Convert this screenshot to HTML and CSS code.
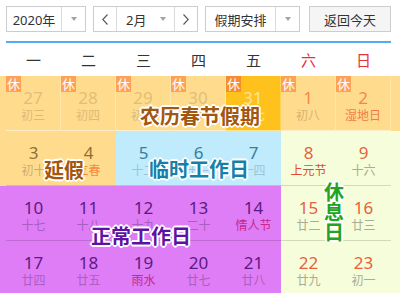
FILE: index.html
```html
<!DOCTYPE html>
<html lang="zh-CN">
<head>
    <meta charset="UTF-8">
    <meta name="viewport" content="width=device-width, initial-scale=1.0">
    <title>假期安排</title>
    <link rel="stylesheet" href="styles.css">
</head>
<body>
    <div class="toolbar">
        <div class="select year">
            <span class="select-text">2020年</span>
            <span class="select-arrow"><i class="caret"></i></span>
        </div>
        <div class="month-group">
            <button class="nav-btn">
                <svg width="6" height="11" viewBox="0 0 6 11"><polyline points="5.5,0.5 0.8,5.5 5.5,10.5" fill="none" stroke="#555" stroke-width="1.1"/></svg>
            </button>
            <div class="month-select"><span>2月</span><i class="caret"></i></div>
            <button class="nav-btn">
                <svg width="6" height="11" viewBox="0 0 6 11"><polyline points="0.5,0.5 5.2,5.5 0.5,10.5" fill="none" stroke="#555" stroke-width="1.1"/></svg>
            </button>
        </div>
        <div class="select holiday">
            <span class="select-text">假期安排</span>
            <span class="select-arrow"><i class="caret"></i></span>
        </div>
        <button class="today-btn">返回今天</button>
    </div>

    <div class="weekdays">
        <div>一</div><div>二</div><div>三</div><div>四</div><div>五</div>
        <div class="weekend">六</div><div class="weekend">日</div>
    </div>

    <div class="month-view">
        <!-- 假期区域底色 -->
        <div class="zone zone-spring"></div>
        <div class="zone zone-extend"></div>
        <div class="zone zone-temp"></div>
        <div class="zone zone-rest"></div>
        <div class="zone zone-work"></div>

        <div class="days">
            <div class="cell spring other"><span class="rest-tag">休</span><div class="num">27</div><div class="lunar">初三</div></div>
            <div class="cell spring other"><span class="rest-tag">休</span><div class="num">28</div><div class="lunar">初四</div></div>
            <div class="cell spring other"><span class="rest-tag">休</span><div class="num">29</div><div class="lunar">初五</div></div>
            <div class="cell spring other"><span class="rest-tag">休</span><div class="num">30</div><div class="lunar">初六</div></div>
            <div class="cell spring selected"><span class="rest-tag">休</span><div class="num">31</div><div class="lunar">初七</div></div>
            <div class="cell spring weekend"><span class="rest-tag">休</span><div class="num">1</div><div class="lunar">初八</div></div>
            <div class="cell spring weekend"><span class="rest-tag">休</span><div class="num">2</div><div class="lunar fest">湿地日</div></div>

            <div class="cell extend"><div class="num">3</div><div class="lunar">初十</div></div>
            <div class="cell extend"><div class="num">4</div><div class="lunar fest">立春</div></div>
            <div class="cell temp"><div class="num">5</div><div class="lunar">十二</div></div>
            <div class="cell temp"><div class="num">6</div><div class="lunar">十三</div></div>
            <div class="cell temp"><div class="num">7</div><div class="lunar">十四</div></div>
            <div class="cell rest"><div class="num">8</div><div class="lunar fest">上元节</div></div>
            <div class="cell rest"><div class="num">9</div><div class="lunar">十六</div></div>

            <div class="cell work"><div class="num">10</div><div class="lunar">十七</div></div>
            <div class="cell work"><div class="num">11</div><div class="lunar">十八</div></div>
            <div class="cell work"><div class="num">12</div><div class="lunar">十九</div></div>
            <div class="cell work"><div class="num">13</div><div class="lunar">二十</div></div>
            <div class="cell work"><div class="num">14</div><div class="lunar fest">情人节</div></div>
            <div class="cell rest"><div class="num">15</div><div class="lunar">廿二</div></div>
            <div class="cell rest"><div class="num">16</div><div class="lunar">廿三</div></div>

            <div class="cell work"><div class="num">17</div><div class="lunar">廿四</div></div>
            <div class="cell work"><div class="num">18</div><div class="lunar">廿五</div></div>
            <div class="cell work"><div class="num">19</div><div class="lunar fest">雨水</div></div>
            <div class="cell work"><div class="num">20</div><div class="lunar">廿七</div></div>
            <div class="cell work"><div class="num">21</div><div class="lunar">廿八</div></div>
            <div class="cell rest"><div class="num">22</div><div class="lunar">廿九</div></div>
            <div class="cell rest"><div class="num">23</div><div class="lunar">初一</div></div>
        </div>

        <!-- 区域说明文字 -->
        <div class="zone-label label-spring">农历春节假期</div>
        <div class="zone-label label-extend">延假</div>
        <div class="zone-label label-temp">临时工作日</div>
        <div class="zone-label label-work">正常工作日</div>
        <div class="zone-label label-rest">休<br>息<br>日</div>
    </div>
</body>
</html>
```

FILE: styles.css
```css
* {
    box-sizing: border-box;
}

body {
    font-family: "Noto Sans", "Noto Sans CJK SC", sans-serif;
    background: #fff;
    color: #333;
    margin: 0;
    width: 400px;
    height: 293px;
    overflow: hidden;
}

/* 顶部工具栏 */
.toolbar {
    display: flex;
    align-items: center;
    padding: 6px 9px 0 6px;
    height: 32px;
}

.select {
    display: flex;
    height: 26px;
    border: 1px solid #cdcdcd;
    background: #fff;
}

.select-text {
    flex: 1;
    display: flex;
    align-items: center;
    justify-content: center;
    font-size: 13px;
    color: #333;
}

.select-arrow {
    width: 24px;
    border-left: 1px solid #dadada;
    display: flex;
    align-items: center;
    justify-content: center;
}

.caret {
    width: 0;
    height: 0;
    border-left: 3.5px solid transparent;
    border-right: 3.5px solid transparent;
    border-top: 4px solid #a3a3a3;
}

.year {
    width: 80px;
}

.month-group {
    margin-left: 7px;
    width: 105px;
    height: 26px;
    display: flex;
    border: 1px solid #cdcdcd;
}

.nav-btn {
    width: 22px;
    border: none;
    background: #fff;
    padding: 0;
    display: flex;
    align-items: center;
    justify-content: center;
}

.month-select {
    flex: 1;
    display: flex;
    align-items: center;
    justify-content: space-between;
    padding: 0 8px 0 9px;
    border-left: 1px solid #dadada;
    border-right: 1px solid #dadada;
    font-size: 13px;
}

.holiday {
    margin-left: 7px;
    width: 95px;
}

.today-btn {
    margin-left: 9px;
    width: 82px;
    height: 26px;
    border: 1px solid #cdcdcd;
    background: #f5f5f5;
    font-family: inherit;
    font-size: 13px;
    color: #333;
    padding: 0;
}

/* 星期表头 */
.weekdays {
    display: grid;
    grid-template-columns: repeat(7, 55px);
    margin: 9px 9px 0 6px;
    height: 35px;
    border-top: 2px solid #56a9f4;
}

.weekdays div {
    display: flex;
    align-items: center;
    justify-content: center;
    font-size: 15px;
    color: #333;
}

.weekdays .weekend {
    color: #e2323c;
}

/* 日历主体 */
.month-view {
    position: relative;
    height: 217px;
}

.zone {
    position: absolute;
}

.zone-spring {
    left: 0;
    top: 0;
    width: 400px;
    height: 55px;
    background: #ffdc8d;
}

.zone-extend {
    left: 0;
    top: 55px;
    width: 116px;
    height: 55px;
    background: #ffdc8d;
}

.zone-temp {
    left: 116px;
    top: 55px;
    width: 165px;
    height: 55px;
    background: #bfebfc;
}

.zone-rest {
    left: 281px;
    top: 55px;
    width: 119px;
    height: 165px;
    background: #f6fdda;
}

.zone-work {
    left: 0;
    top: 110px;
    width: 281px;
    height: 110px;
    background: #df7df6;
}

.days {
    position: relative;
    z-index: 1;
    display: grid;
    grid-template-columns: repeat(7, 55px);
    grid-auto-rows: 55px;
    margin: 0 9px 0 6px;
}

.cell {
    position: relative;
    text-align: center;
    padding-top: 12px;
    border-bottom: 1px solid rgba(0, 0, 0, 0.14);
}

.cell.spring {
    border-bottom-color: rgba(255, 255, 255, 0.5);
    border-right: 1px solid rgba(255, 255, 255, 0.25);
}

.num {
    font-size: 17px;
    line-height: 20px;
}

.lunar {
    font-size: 12px;
    line-height: 16px;
}

.rest-tag {
    position: absolute;
    left: 0;
    top: 0;
    width: 15px;
    height: 16px;
    background: #ffa155;
    color: #fff;
    font-size: 13px;
    line-height: 16px;
    text-align: center;
}

.spring.other .num { color: #e0bf78; }
.spring.other .lunar { color: #dbba78; }

.spring.selected {
    background: #ffc21c;
}
.spring.selected .rest-tag { background: #f68c2c; }
.spring.selected .num { color: #ffe29a; }
.spring.selected .lunar { color: #ffe29a; }

.spring.weekend .num { color: #f58848; }
.spring.weekend .lunar { color: #d5b272; }
.spring.weekend .lunar.fest { color: #f27a4a; }

.extend .num { color: #8e7132; }
.extend .lunar { color: #cbac72; }
.extend .lunar.fest { color: #f2883c; }

.temp .num { color: #3b7c9c; }
.temp .lunar { color: #9ec5d4; }

.rest .num { color: #e8603e; }
.rest .lunar { color: #a9ac96; }
.rest .lunar.fest { color: #e04a30; }

.work .num { color: #5c1a82; }
.work .lunar { color: #a95ec2; }
.work .lunar.fest { color: #c8288e; }

/* 区域标签 */
.zone-label {
    position: absolute;
    z-index: 2;
    font-family: "Noto Sans CJK SC", sans-serif;
    font-weight: 700;
    font-size: 20px;
    line-height: 24px;
    text-shadow:
        1px 1px 0 #fff, -1px -1px 0 #fff, 1px -1px 0 #fff, -1px 1px 0 #fff,
        0 2px 0 #fff, 0 -2px 0 #fff, 2px 0 0 #fff, -2px 0 0 #fff;
}

.label-spring {
    left: 140px;
    top: 28px;
    color: #a2560e;
}

.label-extend {
    left: 44px;
    top: 82px;
    color: #a2560e;
}

.label-temp {
    left: 149px;
    top: 81px;
    color: #1680a9;
}

.label-work {
    left: 91px;
    top: 148px;
    color: #5e12a2;
}

.label-rest {
    left: 324px;
    top: 106px;
    line-height: 20px;
    color: #22a322;
}
```
